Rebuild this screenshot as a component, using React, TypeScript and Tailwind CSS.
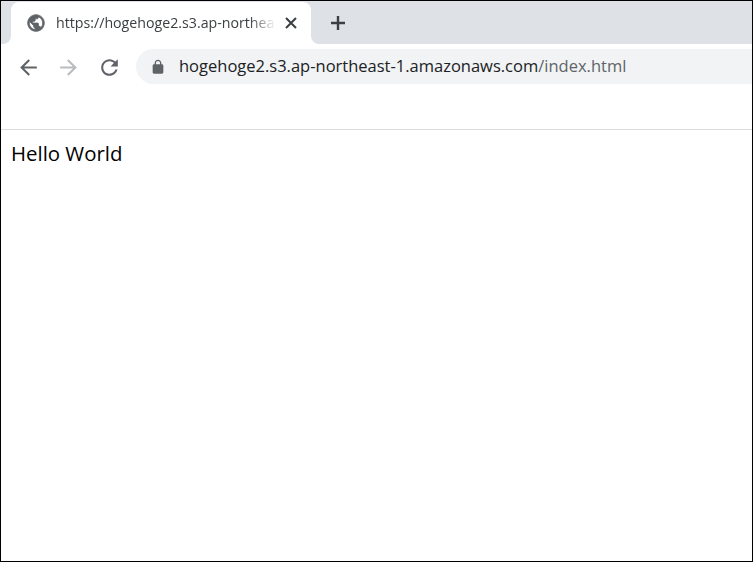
import React from 'react';

const uiFont = "font-['Open_Sans','Noto_Sans',sans-serif]";

const App: React.FC = () => {
  return (
    <div className={`w-[753px] h-[562px] border border-black bg-white overflow-hidden flex flex-col ${uiFont}`}>
      {/* Tab strip */}
      <div className="flex h-[43px] shrink-0 bg-[#dee1e6] pt-px">
        <div className="w-[10px] -mt-px bg-white">
          <div className="h-full bg-[#dee1e6] rounded-br-[8px]"></div>
        </div>
        <div className="w-[300px] bg-white rounded-t-[8px] flex items-center pl-[15px]">
          <svg viewBox="0 0 24 24" className="w-[20px] h-[20px] fill-[#5f6368] stroke-[#5f6368] shrink-0" strokeWidth="0.9">
            <path d="M12 2C6.48 2 2 6.48 2 12s4.48 10 10 10 10-4.48 10-10S17.52 2 12 2zm-1 17.93c-3.95-.49-7-3.85-7-7.93 0-.62.08-1.21.21-1.79L9 15v1c0 1.1.9 2 2 2v1.93zm6.9-2.54c-.26-.81-1-1.39-1.9-1.39h-1v-3c0-.55-.45-1-1-1H8v-2h2c.55 0 1-.45 1-1V7h2c1.1 0 2-.9 2-2v-.41c2.93 1.19 5 4.06 5 7.41 0 2.08-.8 3.97-2.1 5.39z" />
          </svg>
          <div className="ml-[10px] w-[220px] whitespace-nowrap text-[14.2px] text-[#3c4043] [mask-image:linear-gradient(to_right,black_88%,transparent)]">
            https://hogehoge2.s3.ap-northea
          </div>
          <svg viewBox="0 0 12 12" className="ml-[9px] w-[12px] h-[12px] shrink-0 stroke-[#3c4043] fill-none" strokeWidth="2.1">
            <path d="M1 1l10 10M11 1L1 11" />
          </svg>
        </div>
        <div className="w-[431px] -mt-px bg-white">
          <div className="h-full bg-[#dee1e6] rounded-bl-[8px] flex items-center pl-[19px]">
            <svg viewBox="0 0 16 16" className="w-[16px] h-[16px] stroke-[#3c4043] fill-none" strokeWidth="2.4">
              <path d="M8 1v14M1 8h14" />
            </svg>
          </div>
        </div>
      </div>

      {/* Toolbar */}
      <div className="flex items-center h-[40px] mt-[3px] pl-[15px] shrink-0">
        <svg viewBox="0 0 24 24" className="w-[25px] h-[25px] fill-[#5f6368] shrink-0">
          <path d="M20 11H7.83l5.59-5.59L12 4l-8 8 8 8 1.41-1.41L7.83 13H20v-2z" />
        </svg>
        <svg viewBox="0 0 24 24" className="ml-[15px] w-[25px] h-[25px] fill-[#babcbe] shrink-0">
          <path d="M12 4l-1.41 1.41L16.17 11H4v2h12.17l-5.58 5.59L12 20l8-8z" />
        </svg>
        <svg viewBox="0 0 24 24" className="ml-[16px] w-[25px] h-[25px] fill-[#5f6368] shrink-0">
          <path d="M17.65 6.35C16.2 4.9 14.21 4 12 4c-4.42 0-7.99 3.58-7.99 8s3.57 8 7.99 8c3.73 0 6.84-2.55 7.73-6h-2.08c-.82 2.33-3.04 4-5.65 4-3.31 0-6-2.69-6-6s2.69-6 6-6c1.66 0 3.14.69 4.22 1.78L13 11h7V4l-2.35 2.35z" />
        </svg>
        <div className="ml-[14px] flex-1 h-[35px] -mt-px bg-[#f1f3f4] rounded-l-full flex items-center pl-[14px]">
          <svg viewBox="0 0 24 24" className="w-[16px] h-[16px] fill-[#5f6368] shrink-0">
            <path d="M18 8h-1V6c0-2.76-2.24-5-5-5S7 3.24 7 6v2H6c-1.1 0-2 .9-2 2v10c0 1.1.9 2 2 2h12c1.1 0 2-.9 2-2V10c0-1.1-.9-2-2-2zM9 6c0-1.66 1.34-3 3-3s3 1.34 3 3v2H9V6z" />
          </svg>
          <div className="ml-[13px] whitespace-nowrap text-[16.5px] text-[#202124]">
            hogehoge2.s3.ap-northeast-1.amazonaws.com<span className="text-[#5f6368]">/index.html</span>
          </div>
        </div>
      </div>

      {/* Bookmarks gap + divider */}
      <div className="h-[43px] shrink-0 border-b border-[#dadce0]"></div>

      {/* Page */}
      <div className="flex-1 pl-[10px] pt-[7px] text-[20.4px] leading-[32px] text-black">Hello World</div>
    </div>
  );
};

export default App;
